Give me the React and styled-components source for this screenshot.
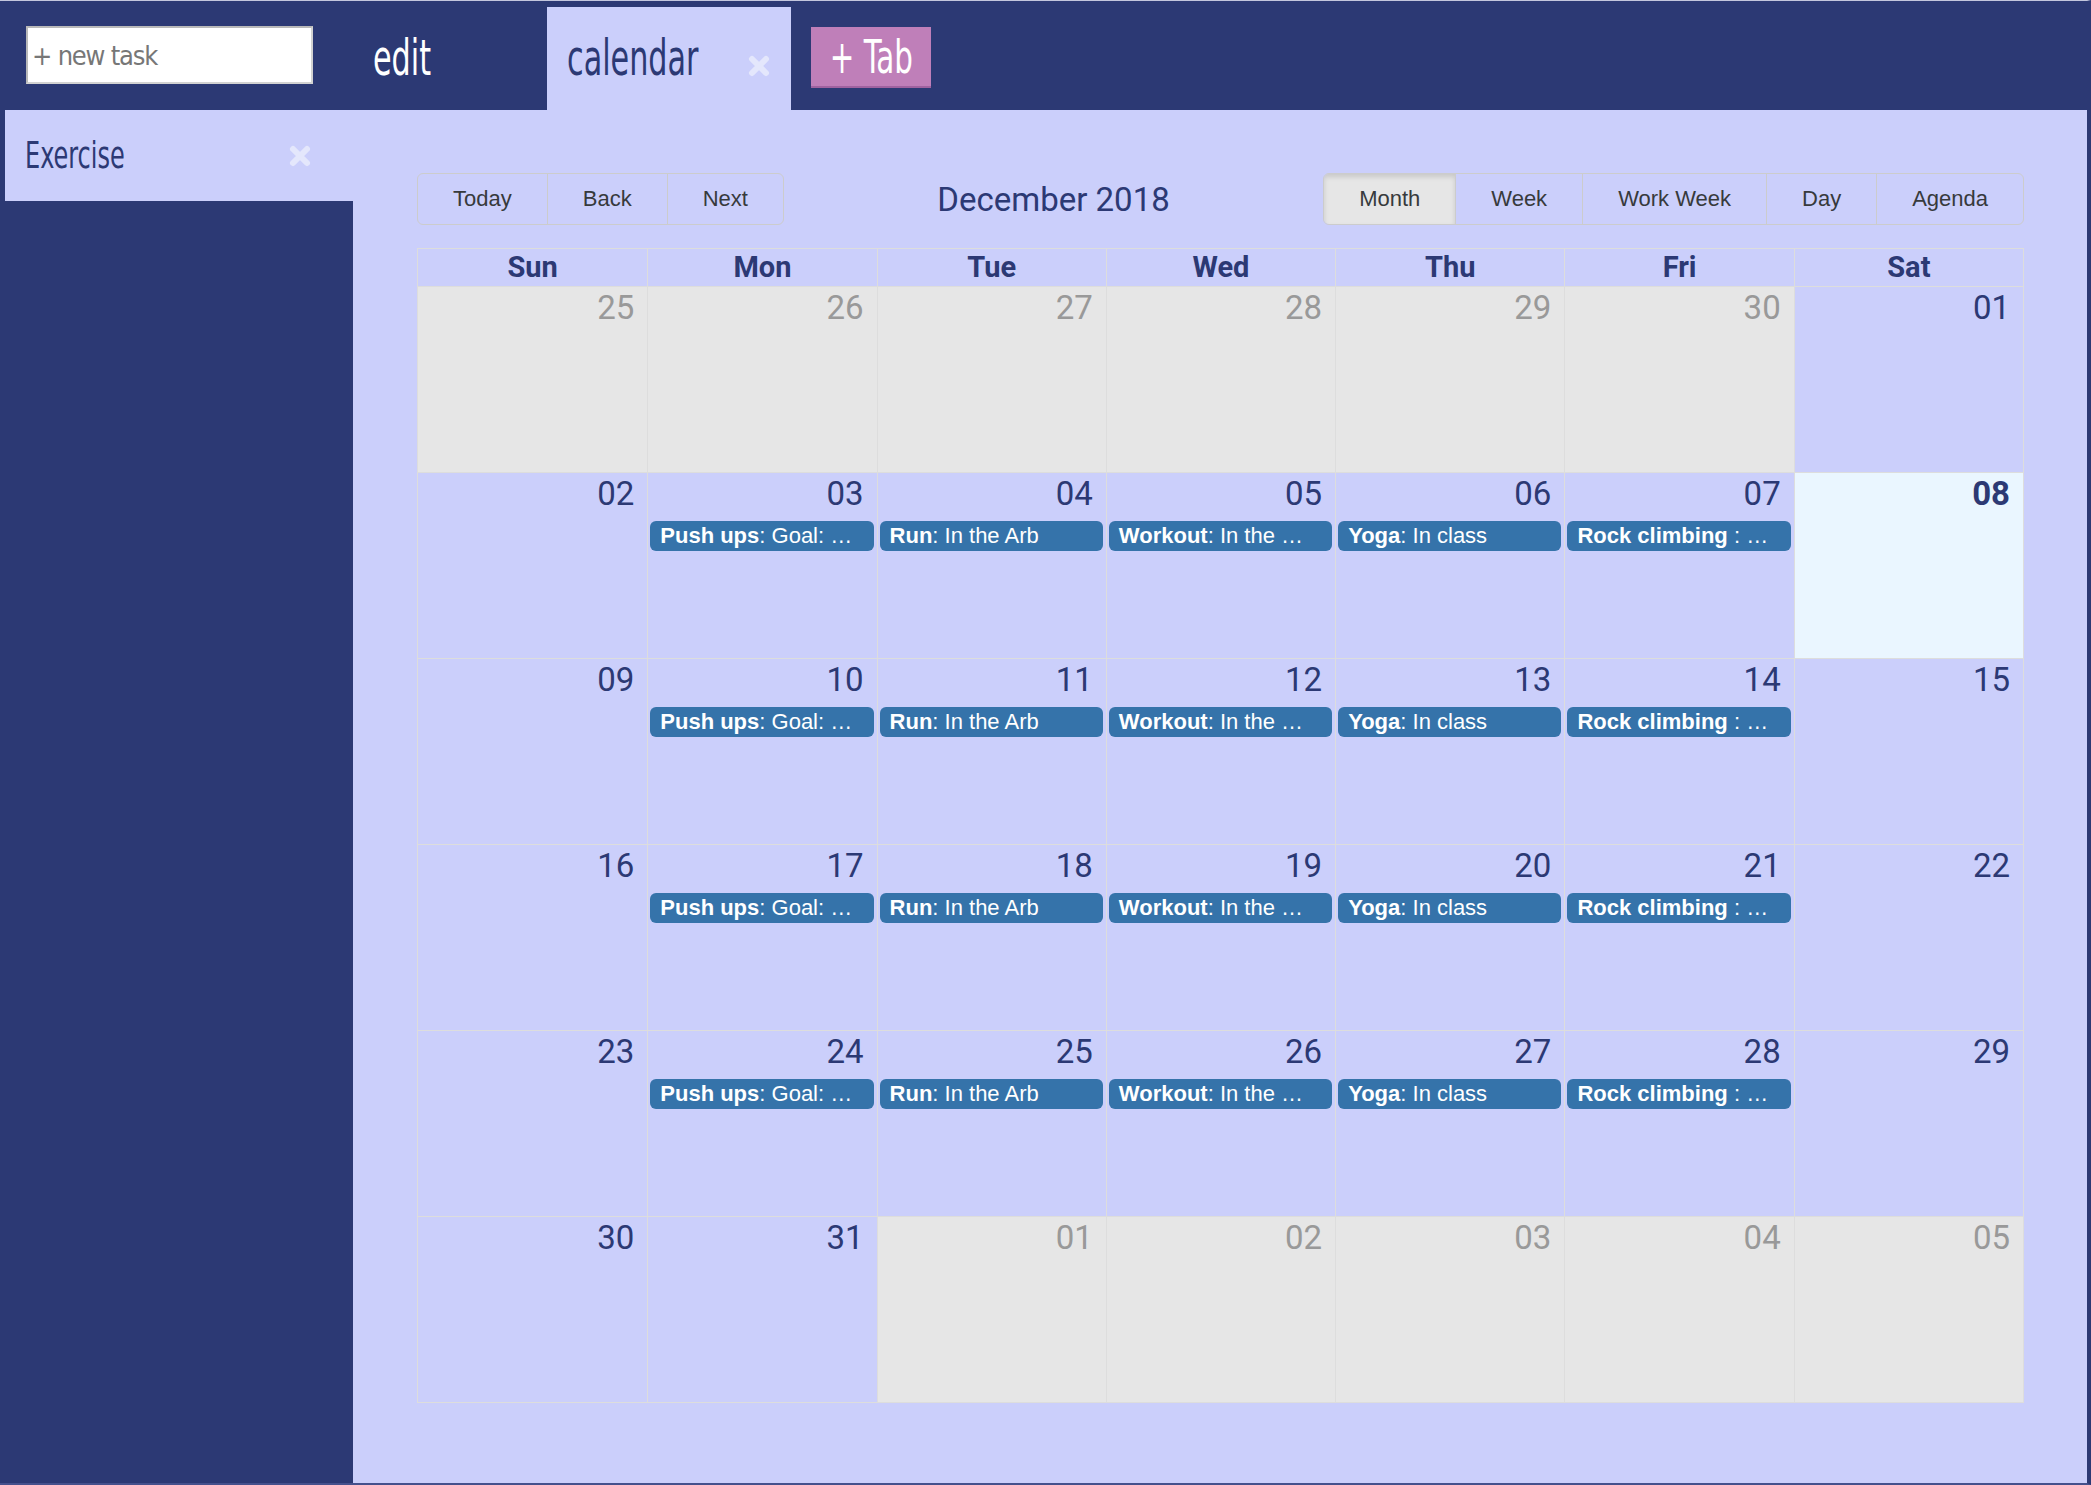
import React from "react";
import styled, { createGlobalStyle } from "styled-components";

const NAVY = "#2c3974";
const LAVENDER = "#cbcffb";
const PINK = "#bf7fb9";
const EVENT_BLUE = "#3573aa";
const CONDENSED = `"Liberation Sans Narrow", "DejaVu Sans Condensed", "Liberation Sans", sans-serif`;
const ARIAL = `"Liberation Sans", Arial, sans-serif`;
const ROBOTO = `Roboto, "Liberation Sans", sans-serif`;

const GlobalStyle = createGlobalStyle`
  html, body {
    margin: 0;
    padding: 0;
    background: ${NAVY};
  }
  * {
    box-sizing: border-box;
  }
`;

const Shell = styled.div`
  width: 2091px;
  height: 1485px;
  display: flex;
  flex-direction: column;
  background: ${NAVY};
  border-top: 1px solid #c3c6dd;
  border-right: 4px solid ${NAVY};
  border-bottom: 2px solid #44508c;
  overflow: hidden;
`;

const TopBar = styled.div`
  height: 109px;
  flex: none;
  display: flex;
  align-items: flex-start;
  padding-left: 26px;
`;

const NewTask = styled.input`
  width: 287px;
  height: 58px;
  margin-top: 25px;
  padding: 0 4px;
  border: 2px solid #d2d2d2;
  border-top-color: #b9b9b9;
  border-left-color: #b9b9b9;
  background: #fff;
  font-family: ${CONDENSED};
  font-size: 27px;
  letter-spacing: -1.2px;
  outline: none;
  &::placeholder {
    color: #777;
  }
`;

const Tab = styled.div`
  width: ${p => p.$width}px;
  height: 103px;
  margin-top: 6px;
  margin-left: ${p => p.$gap || 0}px;
  padding: 0 20px;
  display: flex;
  align-items: center;
  justify-content: space-between;
  background: ${p => (p.$active ? LAVENDER : "transparent")};
`;

const TallLabel = styled.span`
  display: inline-block;
  font-family: ${CONDENSED};
  font-size: ${p => p.$size}px;
  line-height: 1;
  color: ${p => p.$color};
  transform: scale(${p => p.$sx || 0.82}, 1.22);
  transform-origin: ${p => (p.$center ? "center" : "left center")};
  white-space: nowrap;
`;

const AddTab = styled.button`
  width: 120px;
  height: 61px;
  margin: 26px 0 0 20px;
  border: none;
  border-bottom: 2px solid #9f62a0;
  background: ${PINK};
  display: flex;
  align-items: center;
  justify-content: center;
  padding: 0;
`;

const CloseIcon = styled.svg`
  flex: none;
  margin-top: ${p => p.$drop || 0}px;
  fill: none;
  stroke: #e4e7fc;
  stroke-width: 6;
  stroke-linecap: round;
`;

const Close = ({ drop }) => (
  <CloseIcon $drop={drop} width="24" height="24" viewBox="0 0 24 24">
    <path d="M5 5 L19 19 M19 5 L5 19" />
  </CloseIcon>
);

const Body = styled.div`
  flex: 1;
  display: flex;
  min-height: 0;
`;

const Sidebar = styled.div`
  width: 353px;
  flex: none;
  background: ${NAVY};
`;

const SideItem = styled.div`
  height: 91px;
  margin-left: 5px;
  padding: 0 41px 0 20px;
  display: flex;
  align-items: center;
  justify-content: space-between;
  background: ${LAVENDER};
`;

const Main = styled.div`
  flex: 1;
  display: flex;
  flex-direction: column;
  background: ${LAVENDER};
  padding: 63px 63px 80px 64px;
`;

const Toolbar = styled.div`
  height: 52px;
  flex: none;
  display: flex;
  align-items: stretch;
  margin-bottom: 23px;
`;

const ButtonGroup = styled.div`
  display: flex;
  border: 1px solid #ccc;
  border-radius: 6px;
  overflow: hidden;
`;

const ToolButton = styled.button`
  padding: 0 35px;
  border: none;
  border-left: ${p => (p.$first ? "none" : "1px solid #ccc")};
  background: ${p => (p.$active ? "#e6e6e6" : "transparent")};
  box-shadow: ${p => (p.$active ? "inset 0 3px 5px rgba(0,0,0,0.13)" : "none")};
  font-family: ${ARIAL};
  font-size: 22px;
  color: #373a3c;
  cursor: pointer;
`;

const Title = styled.div`
  flex: 1;
  display: flex;
  align-items: center;
  justify-content: center;
  font-family: ${ROBOTO};
  font-size: 33px;
  color: ${NAVY};
`;

const Month = styled.div`
  flex: 1;
  display: flex;
  flex-direction: column;
  border: 1px solid #ddd;
`;

const HeaderRow = styled.div`
  display: grid;
  grid-template-columns: repeat(7, 1fr);
  height: 37px;
  flex: none;
`;

const HeaderCell = styled.div`
  border-left: ${p => (p.$first ? "none" : "1px solid #ddd")};
  text-align: center;
  font-family: ${ROBOTO};
  font-weight: 700;
  font-size: 29px;
  line-height: 37px;
  color: ${NAVY};
`;

const WeekRow = styled.div`
  flex: 1;
  display: grid;
  grid-template-columns: repeat(7, 1fr);
  border-top: 1px solid #ddd;
  min-height: 0;
`;

const DayCell = styled.div`
  min-width: 0;
  border-left: ${p => (p.$first ? "none" : "1px solid #ddd")};
  background: ${p => (p.$today ? "#eaf6ff" : p.$off ? "#e6e6e6" : "transparent")};
`;

const DateNum = styled.div`
  padding: 2px 13px 0 0;
  text-align: right;
  font-family: ${ROBOTO};
  font-size: 33px;
  line-height: 38px;
  font-weight: ${p => (p.$today ? 700 : 400)};
  color: ${p => (p.$off ? "#999" : NAVY)};
`;

const Event = styled.div`
  margin: 8px 3px 0 2px;
  height: 30px;
  padding: 0 10px;
  border-radius: 6px;
  background: ${EVENT_BLUE};
  color: #fff;
  font-family: ${ARIAL};
  font-size: 22px;
  line-height: 30px;
  white-space: nowrap;
  overflow: hidden;
  text-overflow: ellipsis;
  b {
    font-weight: 700;
  }
`;

const DAYS = ["Sun", "Mon", "Tue", "Wed", "Thu", "Fri", "Sat"];

const EVENTS = {
  1: ["Push ups", "Goal: \u2026"],
  2: ["Run", "In the Arb"],
  3: ["Workout", "In the \u2026"],
  4: ["Yoga", "In class"],
  5: ["Rock climbing ", "\u2026"],
};

const buildWeeks = () => {
  const start = new Date(2018, 10, 25);
  const weeks = [];
  for (let w = 0; w < 6; w++) {
    const days = [];
    for (let d = 0; d < 7; d++) {
      const date = new Date(start);
      date.setDate(start.getDate() + w * 7 + d);
      const off = date.getMonth() !== 11;
      const dom = date.getDate();
      days.push({
        key: `${w}-${d}`,
        label: String(dom).padStart(2, "0"),
        off,
        today: !off && dom === 8,
        event: !off && dom >= 3 && dom <= 28 ? EVENTS[d] : null,
      });
    }
    weeks.push(days);
  }
  return weeks;
};

const weeks = buildWeeks();

export default function App() {
  return (
    <>
      <GlobalStyle />
      <Shell>
        <TopBar>
          <NewTask placeholder="+ new task" />
          <Tab $width={194} $gap={40}>
            <TallLabel $size={41} $color="#fff">edit</TallLabel>
          </Tab>
          <Tab $width={244} $active>
            <TallLabel $size={41} $color={NAVY}>calendar</TallLabel>
            <Close drop={15} />
          </Tab>
          <AddTab>
            <TallLabel $size={38} $sx={0.86} $color="#fff" $center>+ Tab</TallLabel>
          </AddTab>
        </TopBar>
        <Body>
          <Sidebar>
            <SideItem>
              <TallLabel $size={31} $sx={0.86} $color={NAVY}>Exercise</TallLabel>
              <Close />
            </SideItem>
          </Sidebar>
          <Main>
            <Toolbar>
              <ButtonGroup>
                <ToolButton $first>Today</ToolButton>
                <ToolButton>Back</ToolButton>
                <ToolButton>Next</ToolButton>
              </ButtonGroup>
              <Title>December 2018</Title>
              <ButtonGroup>
                <ToolButton $first $active>Month</ToolButton>
                <ToolButton>Week</ToolButton>
                <ToolButton>Work Week</ToolButton>
                <ToolButton>Day</ToolButton>
                <ToolButton>Agenda</ToolButton>
              </ButtonGroup>
            </Toolbar>
            <Month>
              <HeaderRow>
                {DAYS.map((d, i) => (
                  <HeaderCell key={d} $first={i === 0}>{d}</HeaderCell>
                ))}
              </HeaderRow>
              {weeks.map((week, w) => (
                <WeekRow key={w}>
                  {week.map((day, i) => (
                    <DayCell key={day.key} $first={i === 0} $off={day.off} $today={day.today}>
                      <DateNum $off={day.off} $today={day.today}>{day.label}</DateNum>
                      {day.event && (
                        <Event>
                          <b>{day.event[0]}</b>: {day.event[1]}
                        </Event>
                      )}
                    </DayCell>
                  ))}
                </WeekRow>
              ))}
            </Month>
          </Main>
        </Body>
      </Shell>
    </>
  );
}
